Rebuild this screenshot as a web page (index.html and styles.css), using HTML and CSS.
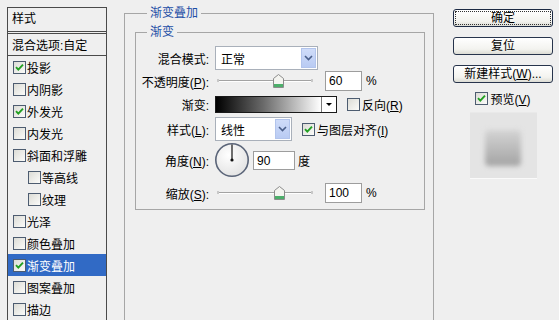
FILE: index.html
```html
<!DOCTYPE html>
<html lang="zh-CN">
<head>
  <meta charset="UTF-8" />
  <title>图层样式</title>
  <link rel="stylesheet" href="styles.css">
</head>
<body>
<div class="dialog">

  <div class="style-list">
    <div class="list-head">样式</div>
    <div class="list-row blend">混合选项:自定</div>
    <div class="list-row"><span class="cb on"><svg width="11" height="11" viewBox="0 0 11 11"><path d="M2 5.2 L4.3 7.6 L9 2.6" fill="none" stroke="#22a022" stroke-width="1.9"/></svg></span>投影</div>
    <div class="list-row"><span class="cb"></span>内阴影</div>
    <div class="list-row"><span class="cb on"><svg width="11" height="11" viewBox="0 0 11 11"><path d="M2 5.2 L4.3 7.6 L9 2.6" fill="none" stroke="#22a022" stroke-width="1.9"/></svg></span>外发光</div>
    <div class="list-row"><span class="cb"></span>内发光</div>
    <div class="list-row"><span class="cb"></span>斜面和浮雕</div>
    <div class="list-row sub"><span class="cb"></span>等高线</div>
    <div class="list-row sub"><span class="cb"></span>纹理</div>
    <div class="list-row"><span class="cb"></span>光泽</div>
    <div class="list-row"><span class="cb"></span>颜色叠加</div>
    <div class="list-row sel"><span class="cb on"><svg width="11" height="11" viewBox="0 0 11 11"><path d="M2 5.2 L4.3 7.6 L9 2.6" fill="none" stroke="#22a022" stroke-width="1.9"/></svg></span>渐变叠加</div>
    <div class="list-row"><span class="cb"></span>图案叠加</div>
    <div class="list-row"><span class="cb"></span>描边</div>
  </div>

  <fieldset class="group outer">
    <legend>渐变叠加</legend>
    <fieldset class="group inner">
      <legend>渐变</legend>

      <div class="row r1">
        <span class="lbl">混合模式:</span>
        <div class="select mode">
          <span class="sel-text">正常</span>
          <i class="drop"><svg width="9" height="6" viewBox="0 0 9 6"><path d="M1 1 L4.5 4.5 L8 1" fill="none" stroke="#4a5f8a" stroke-width="1.6"/></svg></i>
        </div>
      </div>

      <div class="row r2">
        <span class="lbl">不透明度(<u>P</u>):</span>
        <svg class="slider" width="96" height="16" viewBox="0 0 96 16">
          <line x1="1" y1="7.5" x2="95" y2="7.5" stroke="#a3a3a3"/>
          <line x1="1" y1="8.5" x2="95" y2="8.5" stroke="#ffffff"/>
          <rect x="0" y="6" width="2" height="3" fill="#c8c8c8"/>
          <rect x="94" y="6" width="2" height="3" fill="#c8c8c8"/>
          <path d="M61.5 1.5 L66.5 5.5 L66.5 14.5 L56.5 14.5 L56.5 5.5 Z" fill="#f4f4f0" stroke="#8c8c8c"/>
          <rect x="57" y="11" width="9" height="3" fill="#4caf6a"/>
        </svg>
        <span class="num op">60</span>
        <span class="pct">%</span>
      </div>

      <div class="row r3">
        <span class="lbl">渐变:</span>
        <div class="grad">
          <span class="grad-fill"></span>
          <span class="grad-btn"><i class="tri"></i></span>
        </div>
        <span class="cb gap"></span>
        <span class="cb-text">反向(<u>R</u>)</span>
      </div>

      <div class="row r4">
        <span class="lbl">样式(<u>L</u>):</span>
        <div class="select kind">
          <span class="sel-text">线性</span>
          <i class="drop"><svg width="9" height="6" viewBox="0 0 9 6"><path d="M1 1 L4.5 4.5 L8 1" fill="none" stroke="#4a5f8a" stroke-width="1.6"/></svg></i>
        </div>
        <span class="cb on gap"><svg width="11" height="11" viewBox="0 0 11 11"><path d="M2 5.2 L4.3 7.6 L9 2.6" fill="none" stroke="#22a022" stroke-width="1.9"/></svg></span>
        <span class="cb-text">与图层对齐(<u>I</u>)</span>
      </div>

      <div class="row r5">
        <span class="lbl">角度(<u>N</u>):</span>
        <svg class="dial" width="36" height="36" viewBox="0 0 36 36">
          <defs>
            <radialGradient id="dialFill" cx="0.4" cy="0.35" r="0.7">
              <stop offset="0" stop-color="#ffffff"/>
              <stop offset="1" stop-color="#e2e2e2"/>
            </radialGradient>
          </defs>
          <circle cx="18" cy="18" r="16.2" fill="url(#dialFill)" stroke="#5a6478" stroke-width="1.6"/>
          <line x1="18" y1="18" x2="18" y2="2.5" stroke="#111" stroke-width="1.2"/>
          <circle cx="18" cy="18" r="1.6" fill="#111"/>
        </svg>
        <span class="num ang">90</span>
        <span class="deg">度</span>
      </div>

      <div class="row r6">
        <span class="lbl">缩放(<u>S</u>):</span>
        <svg class="slider" width="96" height="16" viewBox="0 0 96 16">
          <line x1="1" y1="7.5" x2="95" y2="7.5" stroke="#a3a3a3"/>
          <line x1="1" y1="8.5" x2="95" y2="8.5" stroke="#ffffff"/>
          <rect x="0" y="6" width="2" height="3" fill="#c8c8c8"/>
          <rect x="94" y="6" width="2" height="3" fill="#c8c8c8"/>
          <path d="M62.5 1.5 L67.5 5.5 L67.5 14.5 L57.5 14.5 L57.5 5.5 Z" fill="#f4f4f0" stroke="#8c8c8c"/>
          <rect x="58" y="11" width="9" height="3" fill="#4caf6a"/>
        </svg>
        <span class="num op">100</span>
        <span class="pct">%</span>
      </div>

    </fieldset>
  </fieldset>

  <div class="side">
    <div class="btn default"><span class="focus">确定</span></div>
    <div class="btn">复位</div>
    <div class="btn">新建样式(<u>W</u>)...</div>
    <div class="preview-check">
      <span class="cb on"><svg width="11" height="11" viewBox="0 0 11 11"><path d="M2 5.2 L4.3 7.6 L9 2.6" fill="none" stroke="#22a022" stroke-width="1.9"/></svg></span>
      <span class="cb-text">预览(<u>V</u>)</span>
    </div>
    <div class="preview"><span class="swatch"></span></div>
  </div>

</div>
</body>
</html>
```

FILE: styles.css
```css
body {
  margin: 0;
  width: 559px;
  height: 320px;
  overflow: hidden;
  background: #efefef;
  color: #000;
  font-family: 'Liberation Sans', 'Noto Sans CJK SC', sans-serif;
  font-size: 12px;
}

u {
  text-underline-offset: 1px;
}

.dialog {
  display: flex;
  align-items: flex-start;
}

/* left list */
.style-list {
  box-sizing: border-box;
  width: 100px;
  height: 313px;
  margin: 7px 0 0 7px;
  border: 1px solid #4a4a4a;
  border-bottom: none;
}

.list-head {
  height: 23px;
  line-height: 23px;
  padding-left: 4px;
  border-bottom: 3px double #4a4a4a;
}

.list-row {
  display: flex;
  align-items: center;
  height: 22px;
  padding-left: 5px;
  white-space: nowrap;
}

.list-row.blend {
  height: 21px;
  padding-left: 4px;
  border-bottom: 1px solid #4a4a4a;
}

.list-row.sub {
  padding-left: 20px;
}

.list-row.sel {
  background: #316ac5;
  color: #fff;
}

.list-row .cb {
  margin-right: 1px;
}

/* checkbox */
.cb {
  box-sizing: border-box;
  display: inline-flex;
  align-items: center;
  justify-content: center;
  flex: none;
  width: 13px;
  height: 13px;
  border: 1px solid #4d5c70;
  background: linear-gradient(135deg, #dcdcd6, #fbfbf9);
}

.cb-text {
  margin-left: 2px;
  white-space: nowrap;
}

/* group boxes */
.group {
  box-sizing: border-box;
  min-width: 0;
  margin: 0;
  border: 1px solid #a6a6a6;
}

.group legend {
  line-height: 14px;
  padding: 0 3px;
  color: #1d4ea6;
}

.outer {
  width: 310px;
  height: 314px;
  margin: 6px 0 0 17px;
  padding: 5px 8px 0 10px;
  border-bottom: none;
}

.outer > legend {
  margin-left: 12px;
}

.inner {
  width: 290px;
  padding: 7px 0 1px 0;
}

.inner > legend {
  margin-left: 11px;
}

.row {
  display: flex;
  align-items: center;
}

.r1 { height: 24px; }
.r2 { height: 22px; }
.r3 { height: 24px; }
.r4 { height: 26px; }
.r5 { height: 36px; }
.r6 { height: 30px; }

.lbl {
  flex: none;
  width: 73px;
  margin-right: 6px;
  text-align: right;
  white-space: nowrap;
}

/* dropdowns */
.select {
  box-sizing: border-box;
  display: flex;
  align-items: center;
  height: 24px;
  border: 1px solid #a9b0ba;
  background: #fff;
}

.select.mode { width: 103px; }
.select.kind { width: 77px; }

.sel-text {
  padding-left: 5px;
}

.drop {
  box-sizing: border-box;
  display: flex;
  align-items: center;
  justify-content: center;
  width: 15px;
  height: 20px;
  margin: 0 1px 0 auto;
  background: linear-gradient(#cfdcf9, #b9cbf3);
  border: 1px solid #b2c4ec;
}

/* slider and number fields */
.slider {
  flex: none;
  margin-left: 2px;
}

.num {
  box-sizing: border-box;
  height: 20px;
  line-height: 18px;
  padding-left: 3px;
  border: 1px solid #9d9d9d;
  background: #fff;
}

.num.op {
  width: 37px;
  margin-left: 12px;
}

.num.ang {
  width: 42px;
  height: 19px;
  margin-left: 3px;
}

.pct {
  margin-left: 4px;
}

.deg {
  margin-left: 3px;
}

.dial {
  flex: none;
  margin-left: -1px;
}

/* gradient picker */
.grad {
  box-sizing: border-box;
  display: flex;
  width: 122px;
  height: 17px;
  border: 1px solid #1a1a1a;
}

.grad-fill {
  flex: 1;
  background: linear-gradient(to right, #000 0%, #6a6a6a 45%, #fff 100%);
}

.grad-btn {
  display: flex;
  align-items: center;
  justify-content: center;
  width: 14px;
  background: #fff;
  border-left: 1px solid #7a7a7a;
}

.tri {
  width: 0;
  height: 0;
  border-left: 3px solid transparent;
  border-right: 3px solid transparent;
  border-top: 3px solid #000;
}

.cb.gap {
  margin-left: 10px;
}

/* right column */
.side {
  display: flex;
  flex-direction: column;
  align-items: center;
  width: 100px;
  margin: 9px 0 0 19px;
}

.btn {
  box-sizing: border-box;
  width: 100px;
  height: 18px;
  margin-bottom: 10px;
  line-height: 16px;
  text-align: center;
  white-space: nowrap;
  border: 1px solid #27344c;
  border-radius: 3px;
  background: linear-gradient(#ffffff, #f3f3ef 70%, #dcdcd4);
}

.btn.default {
  display: flex;
  padding: 1px;
  border-color: #1c2a44;
}

.focus {
  flex: 1;
  line-height: 12px;
  border: 1px dotted #333;
}

.preview-check {
  display: flex;
  align-items: center;
  height: 14px;
  margin-top: -2px;
}

.preview {
  display: flex;
  align-items: center;
  justify-content: center;
  width: 67px;
  height: 65px;
  margin-top: 7px;
  background: #e4e4e4;
  border-top: 1px solid #e9e9e9;
  border-bottom: 1px solid #fafafa;
}

.swatch {
  width: 36px;
  height: 36px;
  margin-top: 4px;
  border-radius: 4px;
  background: linear-gradient(#d4d4d4, #a4a4a4);
  filter: blur(2.5px);
}
```
